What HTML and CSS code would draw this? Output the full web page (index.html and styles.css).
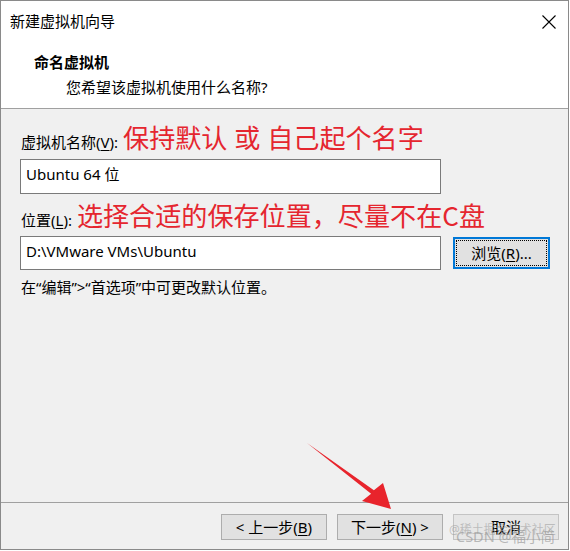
FILE: index.html
```html
<!DOCTYPE html>
<html lang="zh-CN">
<head>
<meta charset="utf-8">
<title>新建虚拟机向导</title>
<link rel="stylesheet" href="styles.css">
</head>
<body>
<div class="window">
  <div class="titlebar">
    <span class="title">新建虚拟机向导</span>
    <svg class="close" width="14" height="14" viewBox="0 0 14 14"><path d="M0.5 0.5 L13.5 13.5 M13.5 0.5 L0.5 13.5" stroke="#000" stroke-width="1.1" fill="none"/></svg>
  </div>
  <div class="header">
    <div class="h-title">命名虚拟机</div>
    <div class="h-sub">您希望该虚拟机使用什么名称?</div>
  </div>
  <div class="content">
    <div class="label-row first">
      <span class="label">虚拟机名称(<u>V</u>):</span>
      <span class="note wide">保持默认 或 自己起个名字</span>
    </div>
    <div class="input tall">Ubuntu 64 位</div>
    <div class="label-row second">
      <span class="label">位置(<u>L</u>):</span>
      <span class="note">选择合适的保存位置，尽量不在C盘</span>
    </div>
    <div class="loc-row">
      <div class="input loc">D:\VMware VMs\Ubuntu</div>
      <button class="btn browse"><span class="focus">浏览(<u>R</u>)...</span></button>
    </div>
    <div class="hint">在“编辑”&gt;“首选项”中可更改默认位置。</div>
  </div>
  <div class="footer">
    <button class="btn">&lt; 上一步(<u>B</u>)</button>
    <button class="btn">下一步(<u>N</u>) &gt;</button>
    <button class="btn cancel">取消</button>
  </div>
  <span class="wm wm1">@稀土掘金技术社区</span>
  <span class="wm wm2">CSDN @福小简</span>
  <svg class="arrow" width="570" height="551" viewBox="0 0 570 551">
    <polygon points="307,443 373.9,490.2 383,483 391,509 362,501 371.1,493.8" fill="#e8242c"/>
  </svg>
</div>
</body>
</html>
```

FILE: styles.css
```css
* { box-sizing: border-box; }
html, body { margin: 0; padding: 0; background: #ffffff; }
body {
  font-family: "Noto Sans", "Noto Sans CJK SC", sans-serif;
  font-size: 15px;
  color: #000;
}
.window {
  position: relative;
  width: 569px;
  height: 550px;
  border: 1px solid #8a8a8a;
  background: #f0f0f0;
  display: flex;
  flex-direction: column;
}
.titlebar {
  height: 40px;
  background: #fff;
  display: flex;
  align-items: center;
  justify-content: space-between;
  padding: 0 12px 0 9px;
}
.title { font-size: 15px; line-height: 20px; }
.close { display: block; margin-top: 2px; }
.header {
  height: 68px;
  background: #fff;
  border-bottom: 1px solid #a0a0a0;
  padding: 11px 0 0 0;
}
.h-title {
  font-weight: 700;
  font-size: 15px;
  line-height: 20px;
  padding-left: 33px;
}
.h-sub {
  font-size: 15px;
  line-height: 20px;
  padding-left: 65px;
  margin-top: 5px;
}
.content {
  flex: 1;
  padding: 11px 0 0 19px;
  display: flex;
  flex-direction: column;
}
.label-row {
  display: flex;
  align-items: baseline;
  gap: 5px;
  height: 39px;
  padding-left: 1px;
}
.label { font-size: 15px; line-height: 20px; }
.label u { text-decoration-thickness: 1px; text-underline-offset: 2px; }
.note {
  font-family: "Noto Sans CJK SC", sans-serif;
  font-size: 26.1px;
  line-height: 34px;
  color: #e5262f;
}
.wide { word-spacing: 1px; }
.input {
  background: #fff;
  border: 1px solid #7a7a7a;
  width: 421px;
  padding: 3px 5px 0;
  line-height: 22px;
  font-size: 15px;
}
.tall { height: 35px; }
.second { margin-top: 4px; height: 38px; }
.loc-row {
  display: flex;
  align-items: center;
  gap: 12px;
}
.loc { height: 34px; padding-top: 3px; }
.btn {
  font-family: "Noto Sans", "Noto Sans CJK SC", sans-serif;
  font-size: 15px;
  background: #e1e1e1;
  border: 1px solid #adadad;
  color: #000;
  padding: 0;
  margin: 0;
  width: 106px;
  height: 26px;
  line-height: 22px;
  display: flex;
  align-items: center;
  justify-content: center;
}
.btn u { text-decoration-thickness: 1px; text-underline-offset: 2px; }
.browse {
  width: 97px;
  height: 32px;
  border: 2px solid #0078d7;
  padding: 1px;
}
.focus {
  flex: 1;
  align-self: stretch;
  border: 1px dotted #000;
  display: flex;
  align-items: center;
  justify-content: center;
}
.hint {
  margin-top: 7px;
  font-size: 15px;
  line-height: 20px;
  padding-left: 1px;
}
.footer {
  height: 47px;
  border-top: 1px solid #a0a0a0;
  display: flex;
  justify-content: flex-end;
  align-items: flex-start;
  gap: 10px;
  padding: 11px 9px 0 0;
}
.cancel {
  background: #e6e6e6;
  border-color: #c4c4c4;
}
.wm {
  position: absolute;
  white-space: nowrap;
  pointer-events: none;
  font-family: "Noto Sans", "Noto Sans CJK SC", sans-serif;
}
.wm1 {
  left: 448px;
  top: 519px;
  font-size: 12px;
  color: rgba(160, 160, 160, 0.6);
}
.wm2 {
  left: 455px;
  top: 524px;
  font-size: 14.5px;
  color: rgba(150, 150, 150, 0.65);
}
.arrow {
  position: absolute;
  left: -1px;
  top: -1px;
  pointer-events: none;
}
```
